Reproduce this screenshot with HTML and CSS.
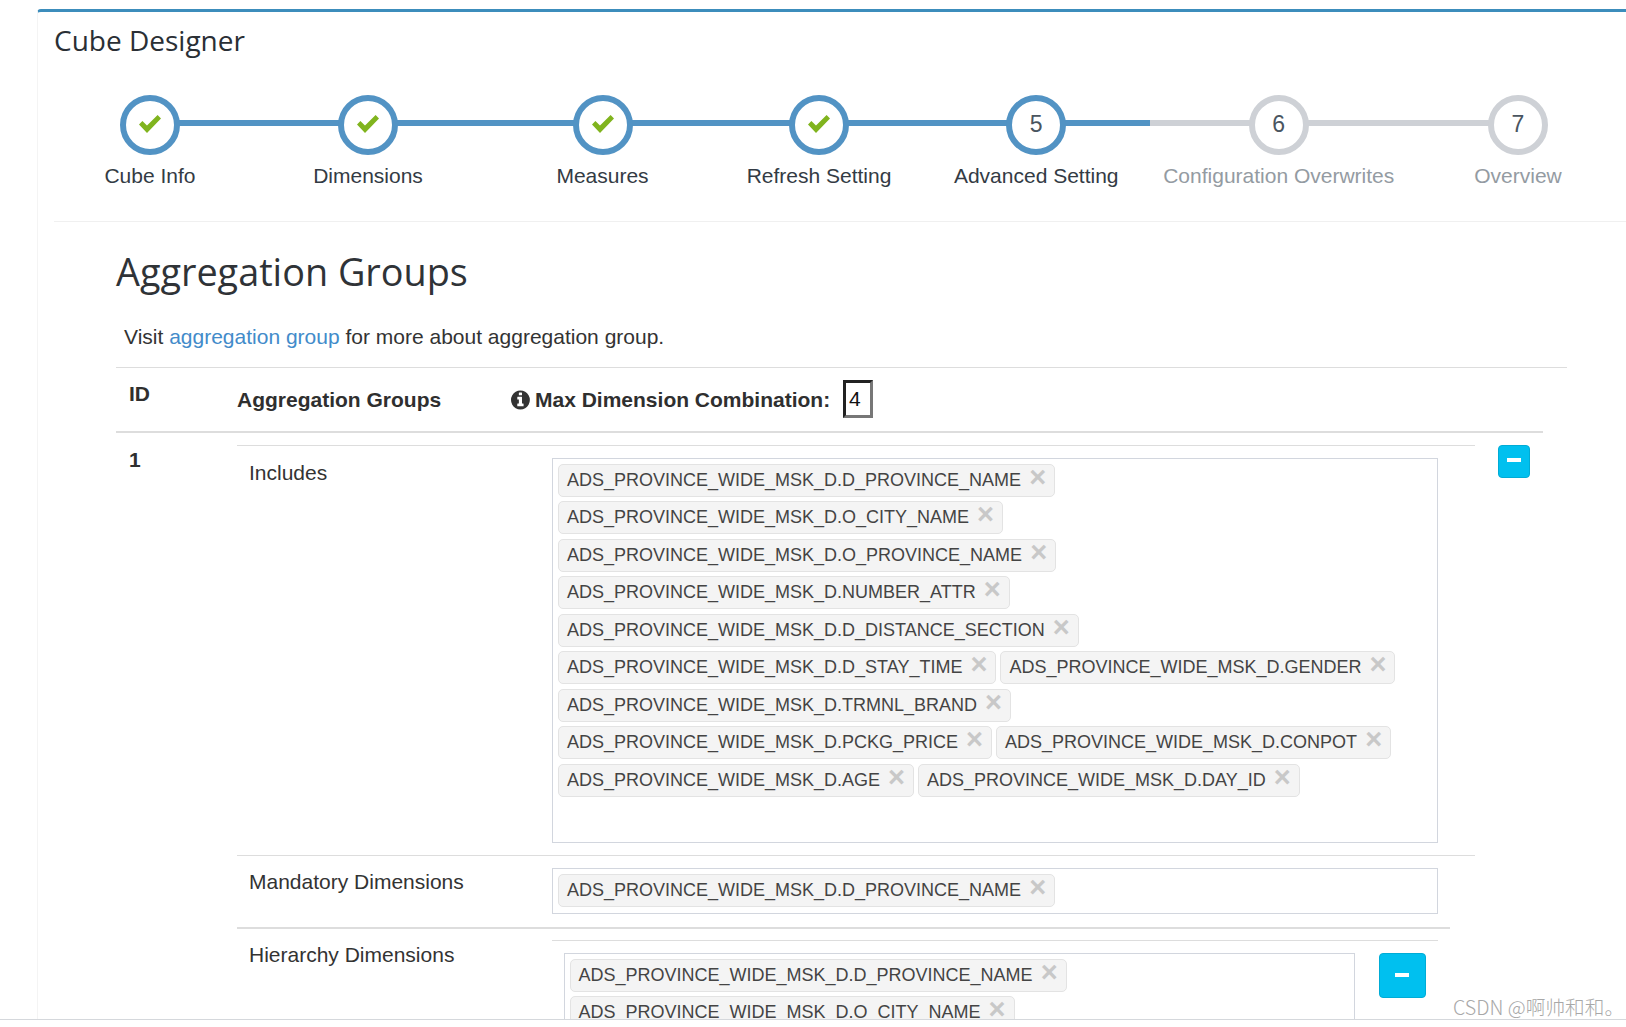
FILE: index.html
```html
<!DOCTYPE html>
<html lang="en">
<head>
<meta charset="utf-8">
<title>Cube Designer</title>
<link rel="stylesheet" href="styles.css">
</head>
<body>
<svg class="defs" width="0" height="0" aria-hidden="true">
  <symbol id="i-check" viewBox="0 0 22 18"><path d="M0 9.5 3.4 6 8 10.600 18.600 0 22 3.400 8 18z"/></symbol>
  <symbol id="i-info" viewBox="0 0 1792 1792"><path d="M1024 1376v-160q0-14-9-23t-23-9h-96v-512q0-14-9-23t-23-9h-320q-14 0-23 9t-9 23v160q0 14 9 23t23 9h96v320h-96q-14 0-23 9t-9 23v160q0 14 9 23t23 9h448q14 0 23-9t9-23zm-128-896v-160q0-14-9-23t-23-9h-192q-14 0-23 9t-9 23v160q0 14 9 23t23 9h192q14 0 23-9t9-23zm640 416q0 209-103 385.500t-279.500 279.500-385.500 103-385.500-103-279.500-279.500-103-385.500 103-385.500 279.500-279.500 385.500-103 385.500 103 279.500 279.500 103 385.500z"/></symbol>
</svg>
<div class="frame">
  <main class="box">
    <h3 class="box-title">Cube Designer</h3>
    <ol class="steps">
      <li class="step step-done s1"><span class="dot"><svg class="check"><use href="#i-check"/></svg></span><span class="step-label">Cube Info</span></li>
      <li class="step step-done s2"><span class="dot"><svg class="check"><use href="#i-check"/></svg></span><span class="step-label">Dimensions</span></li>
      <li class="step step-done s3"><span class="dot"><svg class="check"><use href="#i-check"/></svg></span><span class="step-label">Measures</span></li>
      <li class="step step-done s4"><span class="dot"><svg class="check"><use href="#i-check"/></svg></span><span class="step-label">Refresh Setting</span></li>
      <li class="step step-done s5"><span class="dot">5</span><span class="step-label">Advanced Setting</span></li>
      <li class="step step-todo s6"><span class="dot">6</span><span class="step-label">Configuration Overwrites</span></li>
      <li class="step step-todo s7"><span class="dot">7</span><span class="step-label">Overview</span></li>
    </ol>
    <section class="content">
      <h2 class="page-title">Aggregation Groups</h2>
      <p class="intro">Visit <a href="#">aggregation group</a> for more about aggregation group.</p>
      <div class="table-head">
        <span class="th-id">ID</span>
        <span class="th-groups">Aggregation Groups</span>
        <span class="th-max"><svg class="info"><use href="#i-info"/></svg> Max Dimension Combination:</span>
        <span class="max-input">4</span>
      </div>
      <div class="group">
        <span class="group-id">1</span>
        <div class="group-body">
          <div class="row row-includes">
            <span class="row-label">Includes</span>
            <div class="tagbox tagbox-search">
              <span class="tag">ADS_PROVINCE_WIDE_MSK_D.D_PROVINCE_NAME<span class="x">×</span></span>
              <span class="tag">ADS_PROVINCE_WIDE_MSK_D.O_CITY_NAME<span class="x">×</span></span>
              <span class="tag">ADS_PROVINCE_WIDE_MSK_D.O_PROVINCE_NAME<span class="x">×</span></span>
              <span class="tag">ADS_PROVINCE_WIDE_MSK_D.NUMBER_ATTR<span class="x">×</span></span>
              <span class="tag">ADS_PROVINCE_WIDE_MSK_D.D_DISTANCE_SECTION<span class="x">×</span></span>
              <span class="tag">ADS_PROVINCE_WIDE_MSK_D.D_STAY_TIME<span class="x">×</span></span>
              <span class="tag">ADS_PROVINCE_WIDE_MSK_D.GENDER<span class="x">×</span></span>
              <span class="tag">ADS_PROVINCE_WIDE_MSK_D.TRMNL_BRAND<span class="x">×</span></span>
              <span class="tag">ADS_PROVINCE_WIDE_MSK_D.PCKG_PRICE<span class="x">×</span></span>
              <span class="tag">ADS_PROVINCE_WIDE_MSK_D.CONPOT<span class="x">×</span></span>
              <span class="tag">ADS_PROVINCE_WIDE_MSK_D.AGE<span class="x">×</span></span>
              <span class="tag">ADS_PROVINCE_WIDE_MSK_D.DAY_ID<span class="x">×</span></span>
            </div>
          </div>
          <div class="row row-mandatory">
            <span class="row-label">Mandatory Dimensions</span>
            <div class="tagbox">
              <span class="tag">ADS_PROVINCE_WIDE_MSK_D.D_PROVINCE_NAME<span class="x">×</span></span>
            </div>
          </div>
          <div class="row row-hierarchy">
            <span class="row-label">Hierarchy Dimensions</span>
            <div class="hier">
              <div class="hier-row">
                <div class="tagbox">
                  <span class="tag">ADS_PROVINCE_WIDE_MSK_D.D_PROVINCE_NAME<span class="x">×</span></span>
                  <span class="tag">ADS_PROVINCE_WIDE_MSK_D.O_CITY_NAME<span class="x">×</span></span>
                </div>
                <button class="btn-minus btn-minus-lg" type="button" aria-label="Remove"><span class="bar"></span></button>
              </div>
            </div>
          </div>
        </div>
        <button class="btn-minus" type="button" aria-label="Remove"><span class="bar"></span></button>
      </div>
    </section>
  </main>
</div>
<div class="watermark">CSDN @啊帅和和。</div>
</body>
</html>
```
FILE: styles.css
```css
* { box-sizing: border-box; }
html, body { margin: 0; height: 100%; background: #fff; overflow: hidden; }
body {
  font-family: "Liberation Sans", Arial, sans-serif;
  font-size: 21px;
  color: #333;
  position: relative;
}
.defs { position: absolute; }
.frame {
  height: 1020px;
  padding: 9px 0 0 37px;
  border-bottom: 1px solid #d5d8dc;
  overflow: hidden;
}
.box {
  width: 1640px;
  height: 1100px;
  border-top: 3px solid #3c8dbc;
  border-left: 1px solid #f4f4f4;
  border-top-left-radius: 4px;
  padding-left: 16px;
}
.box-title {
  margin: 0;
  padding-top: 10px;
  height: 83px;
  font: 400 28px/36px "Open Sans", sans-serif;
  color: #2a2f35;
}
.steps {
  list-style: none;
  margin: 0;
  padding: 0;
  display: grid;
  grid-template-columns: 192px 244px 225px 208px 226.500px 258.500px 220px;
  height: 127px;
  width: 1574px;
  border-bottom: 1px solid #f0f0f0;
}
.step {
  position: relative;
  display: flex;
  flex-direction: column;
  align-items: center;
  background: linear-gradient(#5293c4, #5293c4) 0 25px / 100% 6px no-repeat;
}
.s1 { background-position: right 25px; background-size: 50% 6px; }
.s7 { background-position: left 25px; background-size: 50% 6px; }
.step-todo { background-image: linear-gradient(#ced1d6, #ced1d6); }
.dot {
  width: 60px;
  height: 60px;
  border: 6px solid #5293c4;
  border-radius: 50%;
  background: #fff;
  display: flex;
  align-items: center;
  justify-content: center;
  padding-bottom: 2px;
  font-size: 23px;
  color: #4a5560;
}
.step-todo .dot { border-color: #ced1d6; }
.check { width: 22px; height: 18px; fill: #80b41e; }
.step-label { margin-top: 9px; line-height: 24px; white-space: nowrap; color: #333b44; }
.step-todo .step-label { color: #949ba2; }
.content { padding-left: 62px; }
.page-title {
  margin: 0;
  padding-top: 24px;
  height: 101px;
  font: 400 37.800px/52px "Open Sans", sans-serif;
  color: #2f3337;
}
.intro { margin: 0; padding-left: 8px; height: 44px; line-height: 28px; }
.intro a { color: #428bca; text-decoration: none; }
.table-head {
  width: 1451px;
  height: 64px;
  border-top: 1px solid #ddd;
  display: flex;
  position: relative;
  font-weight: 700;
  color: #2f2f2f;
}
.th-id { width: 121px; padding: 13px 0 0 13px; line-height: 26px; flex: none; }
.th-groups { width: 274px; padding-top: 19px; line-height: 26px; flex: none; }
.th-max { display: flex; align-items: flex-start; padding-top: 19px; line-height: 26px; gap: 2px; white-space: nowrap; width: 332px; flex: none; }
.info { width: 22px; height: 22px; margin-top: 2px; fill: #333; flex: none; }
.max-input {
  width: 30px;
  height: 38px;
  margin-top: 12px;
  padding-left: 3px;
  line-height: 32px;
  font-weight: 400;
  color: #111;
  border: 3px solid;
  border-color: #222 #777 #777 #222;
  flex: none;
}
.group {
  width: 1427px;
  border-top: 2px solid #ddd;
  display: flex;
  padding-top: 12px;
}
.group-id { width: 121px; flex: none; padding-left: 13px; line-height: 30px; font-weight: 700; color: #2f2f2f; }
.group-body { width: 1238px; flex: none; }
.btn-minus {
  width: 32px;
  height: 33px;
  margin-left: 23px;
  padding: 0;
  flex: none;
  border: 1px solid #00acd6;
  border-radius: 4px;
  background: #00c0ef;
  display: flex;
  justify-content: center;
  align-items: flex-start;
}
.bar { display: block; width: 14px; height: 4px; margin-top: 12px; background: #fff; }
.btn-minus-lg { width: 47px; height: 45px; margin-left: 24px; }
.btn-minus-lg .bar { width: 14px; margin-top: 19px; }
.row { display: flex; border-top: 1px solid #ddd; padding-top: 12px; }
.row-label { width: 315px; flex: none; padding-left: 12px; line-height: 28px; color: #333; }
.row-includes { height: 410px; }
.row-includes .row-label { padding-top: 1px; }
.row-mandatory { height: 72px; }
.row-hierarchy { padding-top: 0; width: 1213px; border-top: 2px solid #ddd; position: relative; }
.row-hierarchy .row-label { padding-top: 12px; }
.tagbox {
  width: 886px;
  align-self: flex-start;
  border: 1px solid #d2d6de;
  padding: 4.500px 5px 6px;
  display: flex;
  flex-wrap: wrap;
  align-content: flex-start;
  gap: 4.500px 4px;
  font-size: 18px;
}
.tagbox-search { height: 385px; }
.tag {
  height: 33px;
  display: inline-flex;
  align-items: center;
  padding-left: 8px;
  padding-bottom: 1px;
  background: #f4f4f4;
  border: 1px solid #e3e3e3;
  border-radius: 5px;
  white-space: nowrap;
  color: #444;
  line-height: 30px;
}
.x {
  font-size: 29px;
  font-weight: 700;
  color: #c8c8c8;
  margin: -6px 8px 0 8px;
  line-height: 20px;
}
.hier { width: 886px; flex: none; border-top: 1px solid #ddd; margin-top: 11px; padding-top: 12px; }
.hier-row { display: flex; align-items: flex-start; padding-left: 11.500px; }
.hier .tagbox { width: 791px; flex: none; }
.watermark {
  position: absolute;
  left: 1453px;
  top: 994px;
  font: 300 19.700px/26px "Noto Sans CJK SC", "Noto Sans", sans-serif;
  color: #a8a8a8;
  white-space: nowrap;
}
```
